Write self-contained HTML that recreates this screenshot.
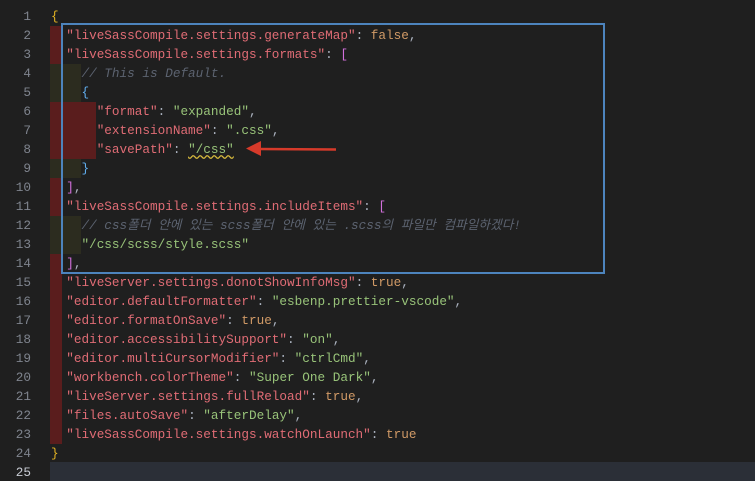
<!DOCTYPE html>
<html><head><meta charset="utf-8"><style>
html,body{margin:0;padding:0;width:755px;height:481px;overflow:hidden;background:#1f1f1f;}
body{position:relative;font-family:"Liberation Mono","Noto Sans CJK KR",monospace;font-size:12.7px;}
.ln{position:absolute;left:0;width:31px;text-align:right;color:#7f848e;height:19px;line-height:19px;}
.t{position:absolute;left:51px;height:19px;line-height:19px;white-space:pre;color:#abb2bf;}
.k{color:#e06c75}.s{color:#98c379}.b{color:#d19a66}.y{color:#e5b523}.p{color:#d16fdb}.c{color:#5c6370;font-style:italic}
.bar{position:absolute;}
.r{background:#5a1d1d}.o{background:#2c2c1f}
</style></head><body>
<div class="bar" style="left:50px;top:462px;width:705px;height:19px;background:#2b2f37"></div>
<!-- indent bars -->
<div class="bar r" style="left:50px;top:26px;width:12px;height:38px"></div>
<div class="bar o" style="left:50px;top:64px;width:31px;height:38px"></div>
<div class="bar r" style="left:50px;top:102px;width:46px;height:57px"></div>
<div class="bar o" style="left:50px;top:159px;width:31px;height:19px"></div>
<div class="bar r" style="left:50px;top:178px;width:12px;height:38px"></div>
<div class="bar o" style="left:50px;top:216px;width:31px;height:38px"></div>
<div class="bar r" style="left:50px;top:254px;width:12px;height:190px"></div>

<div class="ln" style="top:7px">1</div><div class="ln" style="top:26px">2</div><div class="ln" style="top:45px">3</div><div class="ln" style="top:64px">4</div><div class="ln" style="top:83px">5</div><div class="ln" style="top:102px">6</div><div class="ln" style="top:121px">7</div><div class="ln" style="top:140px">8</div><div class="ln" style="top:159px">9</div><div class="ln" style="top:178px">10</div><div class="ln" style="top:197px">11</div><div class="ln" style="top:216px">12</div><div class="ln" style="top:235px">13</div><div class="ln" style="top:254px">14</div><div class="ln" style="top:273px">15</div><div class="ln" style="top:292px">16</div><div class="ln" style="top:311px">17</div><div class="ln" style="top:330px">18</div><div class="ln" style="top:349px">19</div><div class="ln" style="top:368px">20</div><div class="ln" style="top:387px">21</div><div class="ln" style="top:406px">22</div><div class="ln" style="top:425px">23</div><div class="ln" style="top:444px">24</div><div class="ln" style="top:463px;color:#c8ccd4">25</div>

<div class="t" style="top:7px"><span class="y">{</span></div>
<div class="t" style="top:26px">  <span class="k">"liveSassCompile.settings.generateMap"</span>: <span class="b">false</span>,</div>
<div class="t" style="top:45px">  <span class="k">"liveSassCompile.settings.formats"</span>: <span class="p">[</span></div>
<div class="t" style="top:64px">    <span class="c">// This is Default.</span></div>
<div class="t" style="top:83px">    <span class="y" style="color:#61afef">{</span></div>
<div class="t" style="top:102px">      <span class="k">"format"</span>: <span class="s">"expanded"</span>,</div>
<div class="t" style="top:121px">      <span class="k">"extensionName"</span>: <span class="s">".css"</span>,</div>
<div class="t" style="top:140px">      <span class="k">"savePath"</span>: <span class="s" style="text-decoration:underline wavy #d7ba3d">"/css"</span></div>
<div class="t" style="top:159px">    <span style="color:#61afef">}</span></div>
<div class="t" style="top:178px">  <span class="p">]</span>,</div>
<div class="t" style="top:197px">  <span class="k">"liveSassCompile.settings.includeItems"</span>: <span class="p">[</span></div>
<div class="t" style="top:216px">    <span class="c">// css폴더 안에 있는 scss폴더 안에 있는 .scss의 파일만 컴파일하겠다!</span></div>
<div class="t" style="top:235px">    <span class="s">"/css/scss/style.scss"</span></div>
<div class="t" style="top:254px">  <span class="p">]</span>,</div>
<div class="t" style="top:273px">  <span class="k">"liveServer.settings.donotShowInfoMsg"</span>: <span class="b">true</span>,</div>
<div class="t" style="top:292px">  <span class="k">"editor.defaultFormatter"</span>: <span class="s">"esbenp.prettier-vscode"</span>,</div>
<div class="t" style="top:311px">  <span class="k">"editor.formatOnSave"</span>: <span class="b">true</span>,</div>
<div class="t" style="top:330px">  <span class="k">"editor.accessibilitySupport"</span>: <span class="s">"on"</span>,</div>
<div class="t" style="top:349px">  <span class="k">"editor.multiCursorModifier"</span>: <span class="s">"ctrlCmd"</span>,</div>
<div class="t" style="top:368px">  <span class="k">"workbench.colorTheme"</span>: <span class="s">"Super One Dark"</span>,</div>
<div class="t" style="top:387px">  <span class="k">"liveServer.settings.fullReload"</span>: <span class="b">true</span>,</div>
<div class="t" style="top:406px">  <span class="k">"files.autoSave"</span>: <span class="s">"afterDelay"</span>,</div>
<div class="t" style="top:425px">  <span class="k">"liveSassCompile.settings.watchOnLaunch"</span>: <span class="b">true</span></div>
<div class="t" style="top:444px"><span class="y">}</span></div>

<div style="position:absolute;left:61px;top:23px;width:540px;height:247px;border:2px solid #4d84bd"></div>
<svg style="position:absolute;left:0;top:0" width="755" height="481">
<line x1="258" y1="149" x2="336" y2="149.5" stroke="#d63a2a" stroke-width="2.5"/>
<polygon points="246,148.5 261,141 261,156" fill="#d63a2a"/>
</svg>
</body></html>
